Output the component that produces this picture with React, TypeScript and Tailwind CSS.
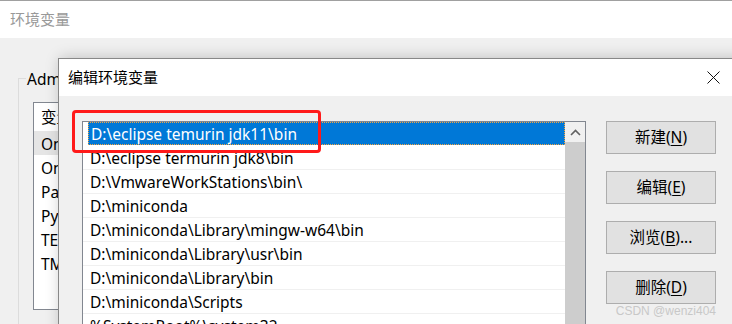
import React from 'react';

const font = { fontFamily: '"Noto Sans", "Noto Sans CJK SC", sans-serif' };

const paths = [
  'D:\\eclipse temurin jdk11\\bin',
  'D:\\eclipse termurin jdk8\\bin',
  'D:\\VmwareWorkStations\\bin\\',
  'D:\\miniconda',
  'D:\\miniconda\\Library\\mingw-w64\\bin',
  'D:\\miniconda\\Library\\usr\\bin',
  'D:\\miniconda\\Library\\bin',
  'D:\\miniconda\\Scripts',
  '%SystemRoot%\\system32',
];

const userVars = ['OneDrive', 'OneDriveConsumer', 'Path', 'PyCharm', 'TEMP', 'TMP'];

function WinButton({ label, hotkey, suffix = '' }: { label: string; hotkey: string; suffix?: string }) {
  return (
    <button className="w-[110px] h-[33px] border border-[#adadad] bg-[#e1e1e1] text-[15.5px] text-black flex items-center justify-center">
      {label}(<span className="underline underline-offset-2">{hotkey}</span>){suffix}
    </button>
  );
}

export default function App() {
  return (
    <div className="relative w-[732px] h-[324px] overflow-hidden bg-[#f0f0f0] text-black" style={font}>
      {/* background window: 环境变量 */}
      <div className="h-[38px] bg-white border-t border-[#a0a0a0] flex items-center pl-[10px] text-[15px] text-[#999999]">
        环境变量
      </div>
      <div className="relative h-[286px]">
        <div className="absolute left-[18px] top-[40px] w-[400px] h-[260px] border border-[#dcdcdc]" />
        <div className="absolute left-[26px] top-[30px] px-[1px] bg-[#f0f0f0] text-[15.5px]">
          Adm
        </div>
        <div className="absolute left-[33px] top-[64px] w-[400px] h-[208px] bg-white border border-[#828790] text-[15.5px]">
          <div className="h-[28px] flex items-center pl-[7px] pt-[2px]">变量</div>
          {userVars.map((v, i) => (
            <div key={v} className={`h-[24px] flex items-center pl-[7px] pt-[3px] ${i === 0 ? 'bg-[#e5e5e5]' : ''}`}>
              {v}
            </div>
          ))}
        </div>
      </div>

      {/* dialog: 编辑环境变量 */}
      <div className="absolute left-[58px] top-[58px] w-[700px] h-[300px] border border-[#888888] bg-[#f0f0f0] shadow-[2px_0_14px_rgba(0,0,0,0.22)]">
        <div className="h-[37px] bg-white flex items-center justify-between pl-[9px] pr-[37px] text-[15px]">
          <span>编辑环境变量</span>
          <svg width="13" height="13" viewBox="0 0 13 13">
            <path d="M0.5 0.5 L12.5 12.5 M12.5 0.5 L0.5 12.5" stroke="#111" strokeWidth="1" />
          </svg>
        </div>
        <div className="flex pl-[23px] pt-[25px] gap-[20px]">
          <div className="relative w-[504px] h-[220px] bg-white border border-[#828790] flex">
            <div className="flex-1 text-[15.5px]">
              {paths.map((p, i) =>
                i === 0 ? (
                  <div key={p} className="h-[24px] pl-[5px]">
                    <div className="h-[23px] bg-[#0078d7] text-white border border-dotted border-[#f5a540] flex items-center pl-[2px] pt-[3px]">
                      {p}
                    </div>
                  </div>
                ) : (
                  <div key={p} className="h-[24px] border-b border-[#f0f0f0] flex items-center pl-[7px] pt-[3px] whitespace-nowrap">
                    {p}
                  </div>
                )
              )}
            </div>
            <div className="w-[20px] bg-[#f0f0f0] flex flex-col">
              <div className="h-[20px] flex items-center justify-center">
                <svg width="11" height="7" viewBox="0 0 11 7">
                  <path d="M1 6 L5.5 1.5 L10 6" fill="none" stroke="#606060" strokeWidth="1.6" />
                </svg>
              </div>
              <div className="flex-1 bg-[#cdcdcd]" />
            </div>
            {/* red highlight annotation */}
            <div className="absolute left-[-11px] top-[-12px] w-[249px] h-[43px] border-[3.5px] border-[#ff1a1a] rounded-[4px]" />
          </div>
          <div className="flex flex-col gap-[17px]">
            <WinButton label="新建" hotkey="N" />
            <WinButton label="编辑" hotkey="E" />
            <WinButton label="浏览" hotkey="B" suffix="..." />
            <WinButton label="删除" hotkey="D" />
          </div>
        </div>
      </div>

      <div className="absolute right-[16px] bottom-[4px] text-[12px] text-[#c8c8c8]" style={{ fontFamily: '"Liberation Sans", sans-serif' }}>
        CSDN @wenzi404
      </div>
    </div>
  );
}
